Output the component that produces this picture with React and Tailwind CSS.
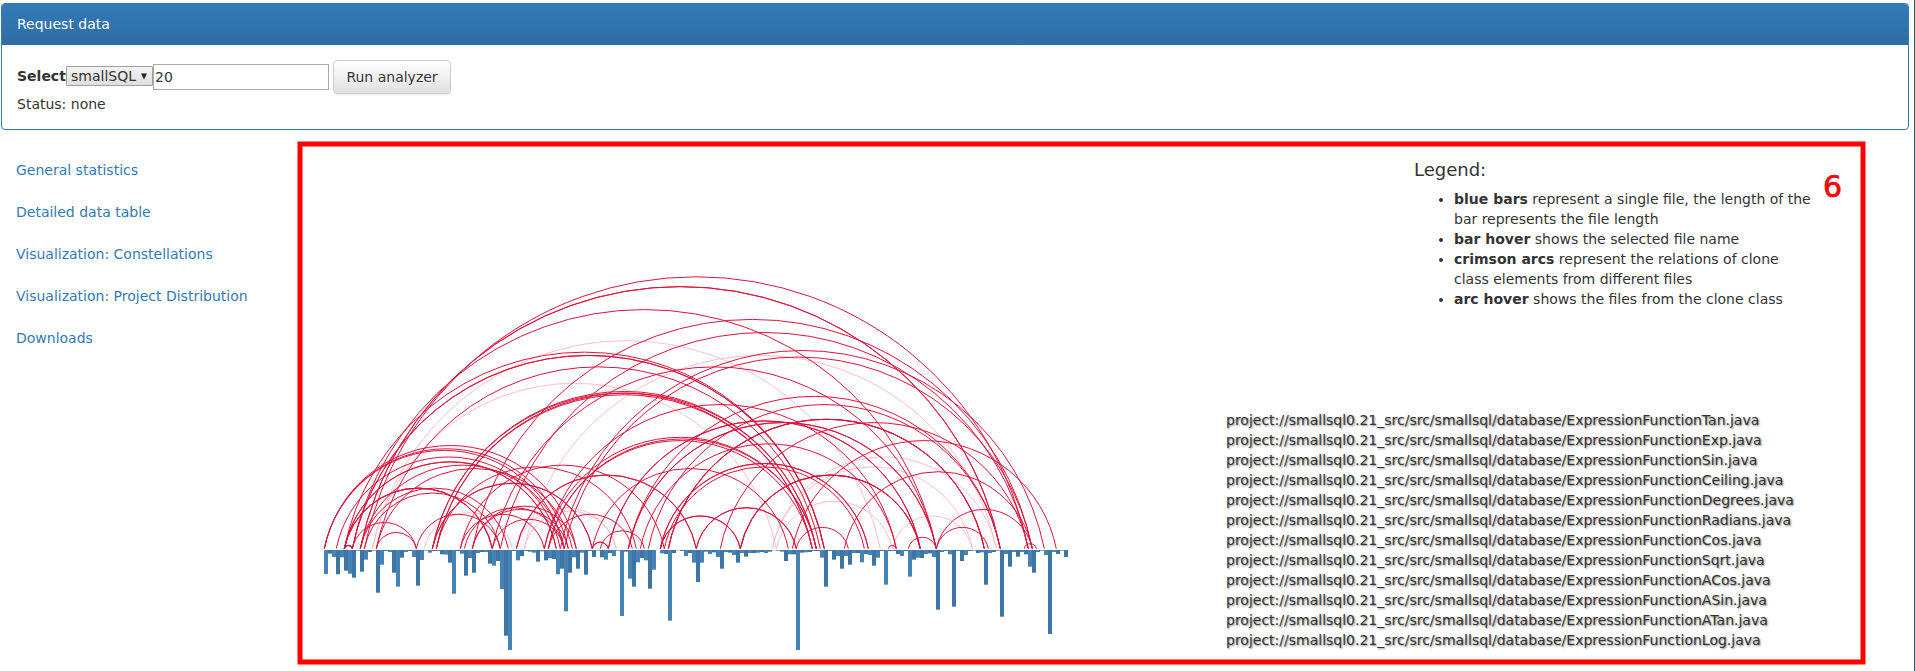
import React from "react";

// Bar lengths in thirds of a pixel, one bar per source file.
const BARS = [
  72, 11, 21, 73, 22, 62, 71, 83, 2, 65, 29, 6, 2, 128, 44, 3, 6, 68, 110, 23,
  6, 3, 21, 107, 30, 2, 8, 3, 3, 13, 14, 38, 131, 3, 11, 77, 24, 68, 9, 6,
  6, 41, 47, 33, 117, 257, 300, 3, 31, 18, 3, 5, 8, 35, 4, 31, 25, 27, 73, 56,
  184, 68, 22, 56, 8, 74, 3, 21, 2, 22, 29, 9, 18, 2, 198, 5, 86, 110, 37, 24,
  31, 116, 59, 0, 10, 12, 212, 9, 1, 3, 18, 9, 38, 96, 38, 5, 12, 7, 21, 56,
  6, 8, 15, 38, 9, 20, 9, 9, 8, 6, 9, 5, 1, 2, 5, 33, 13, 13, 300, 8,
  7, 6, 3, 3, 23, 110, 3, 29, 18, 56, 18, 44, 9, 9, 37, 12, 15, 47, 23, 3,
  104, 3, 3, 12, 18, 3, 80, 29, 23, 24, 12, 10, 21, 179, 6, 3, 13, 170, 3, 33,
  15, 3, 2, 9, 7, 104, 9, 6, 2, 200, 12, 50, 6, 20, 6, 13, 50, 68, 6, 2,
  15, 252, 6, 12, 2, 21,
];

// [start x, end x, number of overlapping clone classes]
const ARCS = [
  [364, 1028, 1], [360, 1000, 2], [352, 936, 1], [472, 1032, 1], [500, 1028, 1],
  [560, 1044, 1], [564, 1032, 1], [344, 824, 1], [352, 824, 2], [376, 820, 1],
  [432, 816, 1], [432, 812, 1], [436, 816, 1], [436, 812, 1], [492, 936, 1],
  [628, 1000, 1], [648, 1000, 1], [544, 896, 1], [668, 984, 3], [608, 920, 2],
  [628, 936, 2], [720, 1028, 1], [792, 1056, 1], [544, 816, 1], [548, 816, 1],
  [548, 812, 1], [640, 896, 1], [592, 788, 1], [660, 868, 2], [664, 864, 1],
  [740, 920, 3], [660, 740, 2], [696, 796, 2], [516, 696, 2], [460, 664, 1],
  [436, 636, 1], [432, 592, 2], [324, 576, 1], [324, 568, 1], [324, 564, 1],
  [336, 560, 1], [344, 556, 2], [360, 564, 1], [376, 572, 1], [344, 492, 3],
  [360, 508, 1], [364, 500, 1], [352, 416, 1], [376, 416, 1], [344, 352, 3],
  [416, 500, 1], [472, 576, 1], [472, 568, 1], [464, 564, 1], [460, 544, 1],
  [492, 564, 1], [548, 632, 1], [600, 644, 1], [592, 608, 2], [796, 848, 1],
  [888, 896, 1], [908, 936, 1], [936, 988, 1], [936, 1032, 1], [844, 1032, 1],
  [1024, 1036, 1],
];

const FAINT_ARCS = [
  [372, 880], [372, 776], [524, 996], [424, 512], [516, 616], [524, 616],
  [776, 892], [892, 972], [772, 972], [772, 996],
];

const FILES = [
  "Tan", "Exp", "Sin", "Ceiling", "Degrees", "Radians",
  "Cos", "Sqrt", "ACos", "ASin", "ATan", "Log",
];

const LINKS = [
  "General statistics",
  "Detailed data table",
  "Visualization: Constellations",
  "Visualization: Project Distribution",
  "Downloads",
];

function arcPath(a, b) {
  const r = (b - a) * 0.51;
  return `M${a + 0.3},548.7A${r},${r} 0 0 1 ${b + 0.3},548.7`;
}

function ArcChart() {
  return (
    <svg viewBox="310 150 790 509" className="block h-[509px] w-[790px] shrink-0">
      <g fill="none" stroke="#ffc0cb" strokeWidth="1">
        {FAINT_ARCS.map(([a, b]) => (
          <path key={`${a}-${b}`} d={arcPath(a, b)} />
        ))}
      </g>
      <g fill="none" stroke="#dc143c" strokeWidth="1">
        {ARCS.flatMap(([a, b, n]) =>
          Array.from({ length: n }, (_, i) => (
            <path key={`${a}-${b}-${i}`} d={arcPath(a, b)} />
          ))
        )}
      </g>
      {BARS.map((h, i) => (
        <rect
          key={i}
          x={324 + i * 4}
          y={550}
          width={4}
          height={h / 3}
          fill={i % 2 ? "#3f75a2" : "#4682b4"}
        />
      ))}
    </svg>
  );
}

function RequestPanel() {
  return (
    <section className="ml-px mt-[3px] h-[127px] w-[1908px] rounded-[4px] border border-[#337ab7] bg-white shadow-[0_1px_2px_rgba(0,0,0,0.05)]">
      <h3 className="h-[41px] rounded-t-[3px] bg-linear-to-b from-[#337ab7] to-[#2e6da4] px-[15px] py-[10px] text-white">
        Request data
      </h3>
      <div className="px-[15px] pt-[15px]">
        <div className="flex h-[34px] items-center">
          <b className="w-[49px] shrink-0 pb-[2px]">Select</b>
          <div className="mb-[2px] flex h-[20px] w-[87px] items-center justify-between rounded-[1px] border border-[#a0a0a0] bg-linear-to-b from-[#f4f4f4] to-[#dedede] pl-[4px] pr-[5px]">
            <span>smallSQL</span>
            <svg viewBox="0 0 6 7" className="h-[7px] w-[6px]">
              <path d="M0 0.5H6L3 6.5Z" fill="#222" />
            </svg>
          </div>
          <input
            defaultValue="20"
            className="h-[26px] w-[176px] border border-[#a9a9a9] bg-white px-px outline-none"
          />
          <button className="ml-[4px] h-[34px] w-[118px] rounded-[4px] border border-[#ccc] bg-linear-to-b from-white to-[#e0e0e0] shadow-[inset_0_1px_0_rgba(255,255,255,0.15),0_1px_1px_rgba(0,0,0,0.075)] [text-shadow:0_1px_0_#fff]">
            Run analyzer
          </button>
        </div>
        <p>Status: none</p>
      </div>
    </section>
  );
}

function Legend() {
  return (
    <div className="ml-[314px] w-[416px]">
      <h4 className="h-[20px] text-[18px] leading-[20px]">Legend:</h4>
      <ul className="mt-[9px] list-disc pl-[40px]">
        <li><b>blue bars</b> represent a single file, the length of the<br />bar represents the file length</li>
        <li><b>bar hover</b> shows the selected file name</li>
        <li><b>crimson arcs</b> represent the relations of clone<br />class elements from different files</li>
        <li><b>arc hover</b> shows the files from the clone class</li>
      </ul>
    </div>
  );
}

export default function App() {
  return (
    <div className="relative flex h-[671px] w-[1915px] flex-col overflow-hidden border-r border-[#4d5a66] bg-white font-['DejaVu_Sans',sans-serif] text-[14px] leading-[20px] text-[#333]">
      <RequestPanel />
      <main className="mt-[20px] flex">
        <nav className="flex w-[310px] shrink-0 flex-col gap-[2px] pl-px">
          {LINKS.map((label) => (
            <a key={label} className="px-[15px] py-[10px] text-[#337ab7]">{label}</a>
          ))}
        </nav>
        <ArcChart />
        <div className="flex shrink-0 flex-col pt-[10px]">
          <Legend />
          <ul className="ml-[126px] mt-[101px] whitespace-nowrap [text-shadow:1px_1px_2px_rgba(0,0,0,0.5)]">
            {FILES.map((name) => (
              <li key={name}>
                {`project://smallsql0.21_src/src/smallsql/database/ExpressionFunction${name}.java`}
              </li>
            ))}
          </ul>
        </div>
      </main>
      <svg className="pointer-events-none absolute left-0 top-0 h-[671px] w-[1914px]">
        <rect x="300" y="144" width="1563" height="518" fill="none" stroke="#f00" strokeWidth="5" />
      </svg>
      <span className="absolute left-[1823px] top-[172px] text-[30px] leading-[30px] text-[#f00] [-webkit-text-stroke:0.7px_#f00]">6</span>
    </div>
  );
}
